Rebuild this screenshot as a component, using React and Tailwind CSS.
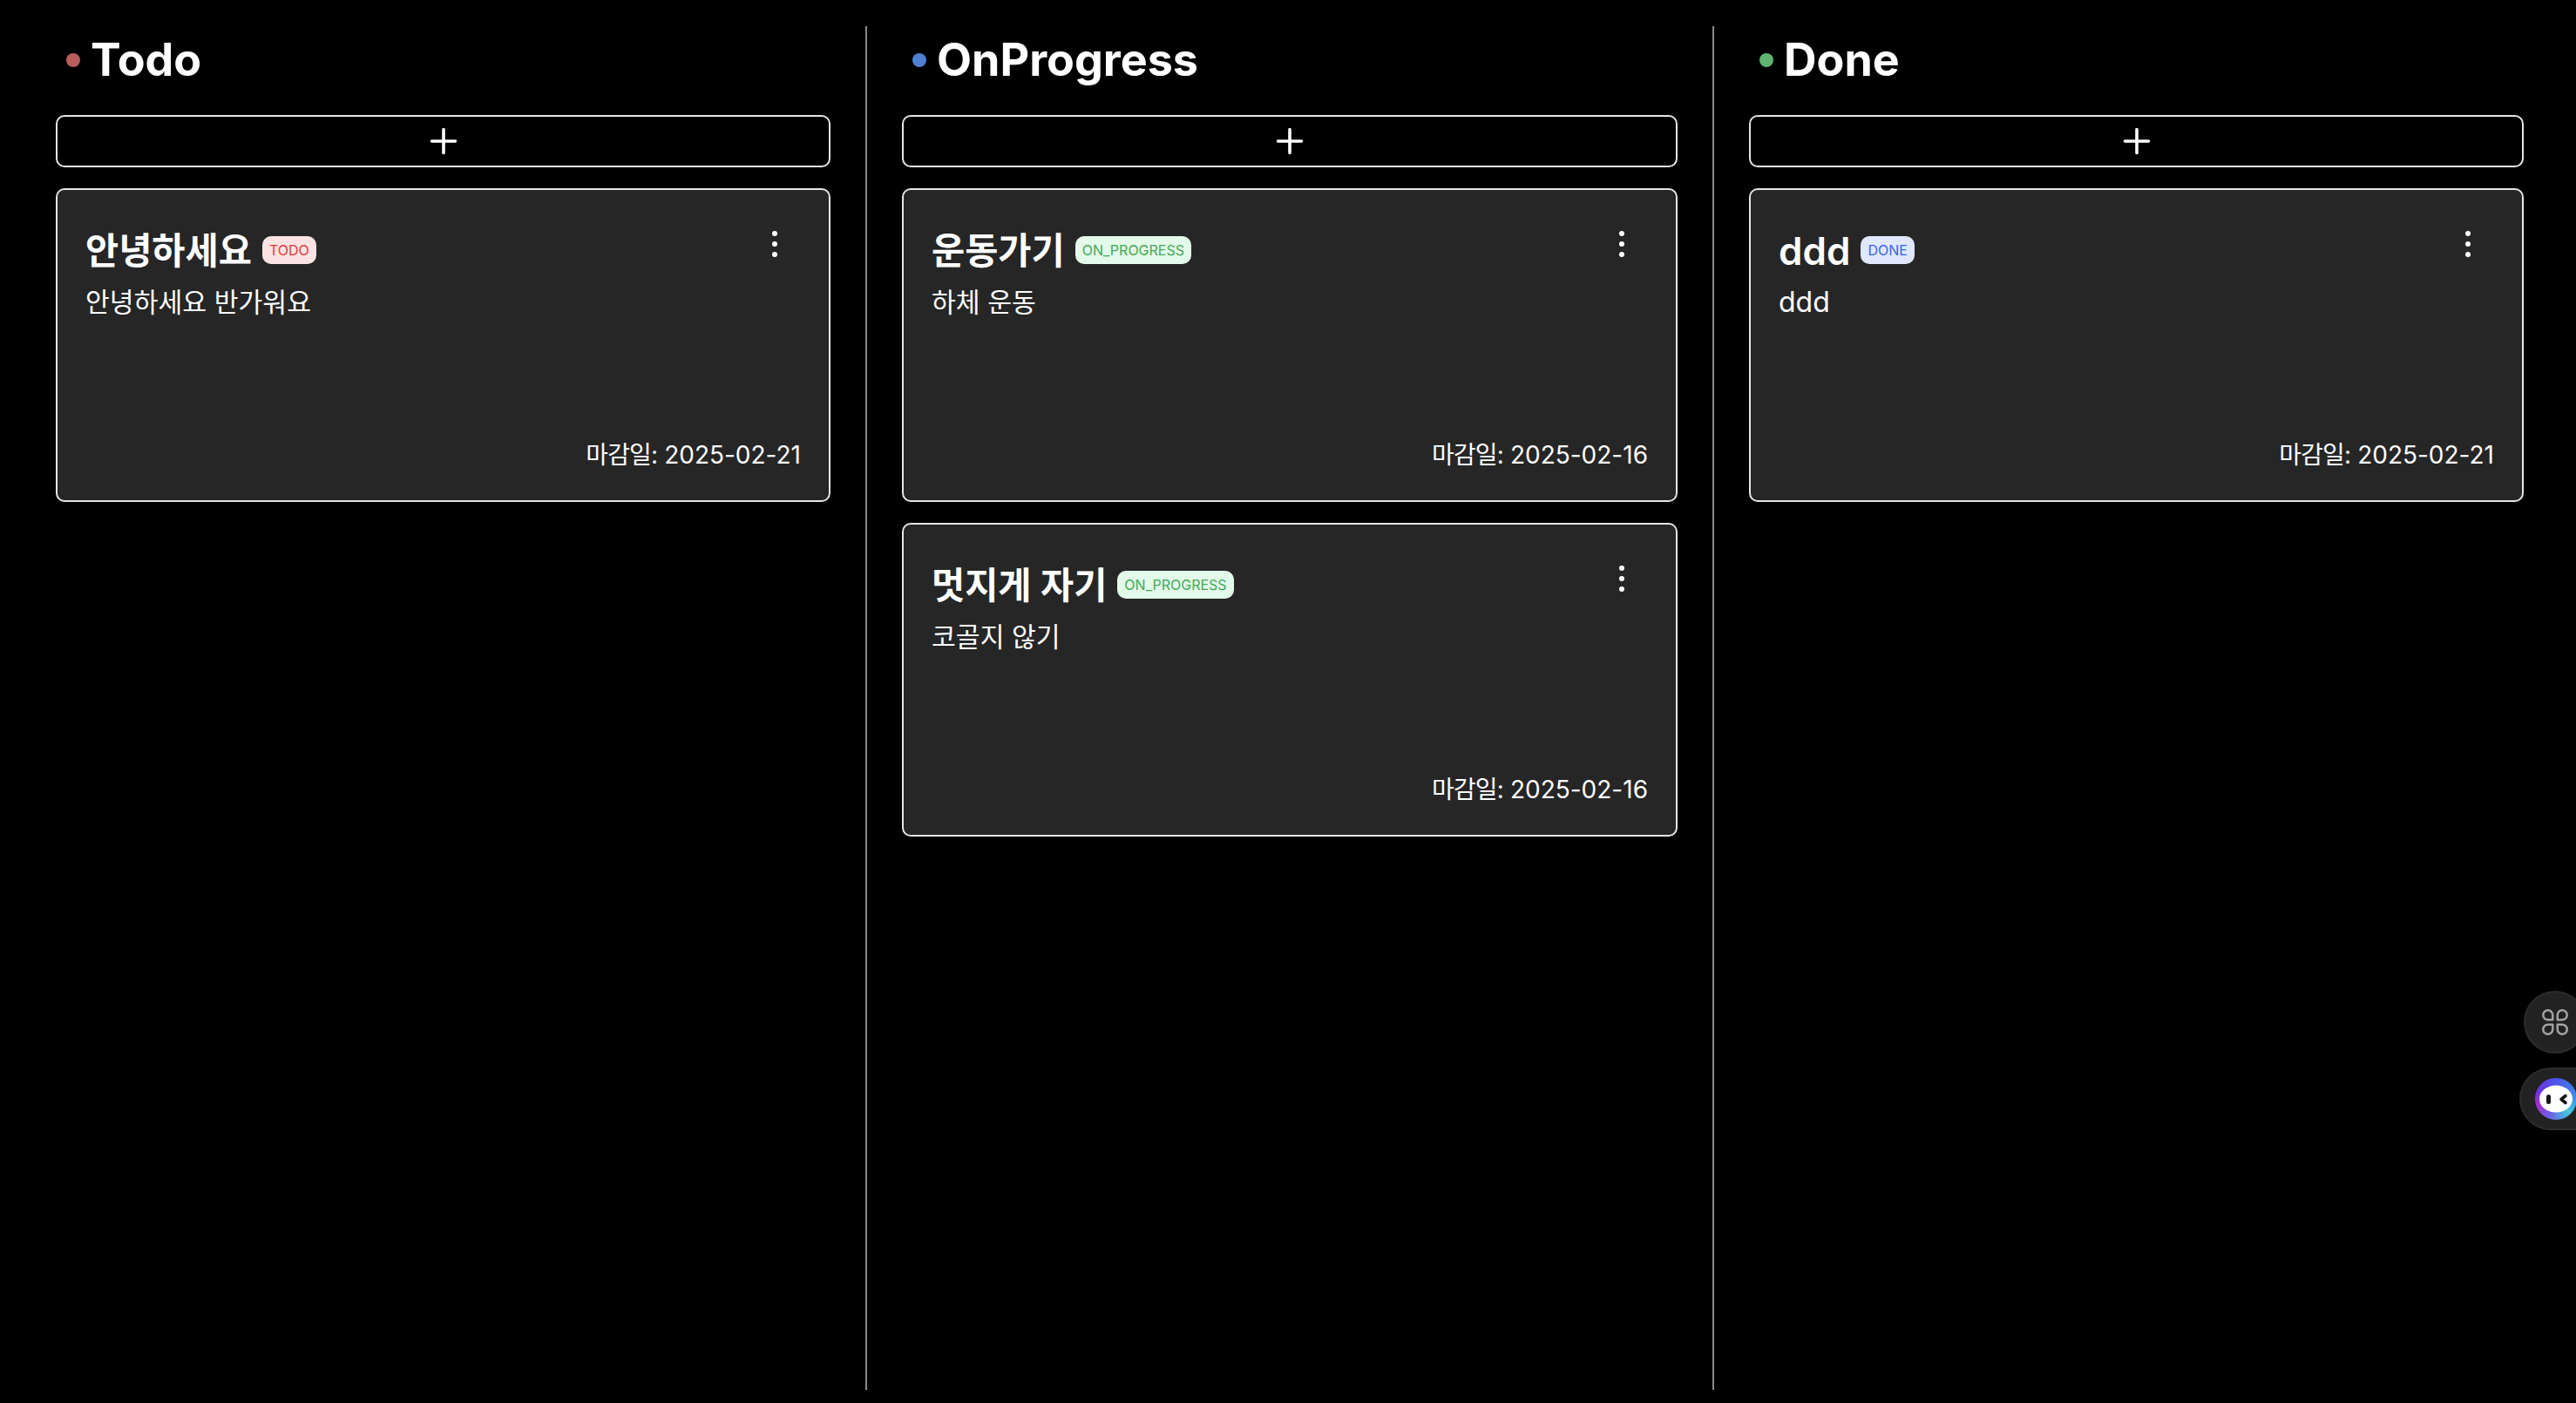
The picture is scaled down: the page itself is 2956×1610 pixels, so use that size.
import React from "react";

function Plus() {
  return (
    <svg width="32" height="32" viewBox="0 0 32 32" fill="none" stroke="#ffffff" strokeWidth="3.6" strokeLinecap="round">
      <path d="M16 2.500v27M2.500 16h27" />
    </svg>
  );
}

function Kebab() {
  return (
    <svg width="12" height="36" viewBox="0 0 12 36" fill="#ffffff">
      <circle cx="6" cy="6" r="3" />
      <circle cx="6" cy="18" r="3" />
      <circle cx="6" cy="30" r="3" />
    </svg>
  );
}

const badgeTone = {
  TODO: "bg-[#fbe3e3] text-[#e03a3a]",
  ON_PROGRESS: "bg-[#e3f9e9] text-[#43a857]",
  DONE: "bg-[#e0e8ff] text-[#3b63e6]",
};

function Card({ title, status, desc, due, latin }) {
  return (
    <div className="h-[360px] rounded-[10px] border-2 border-[#e5e5e5] bg-[#262626] px-[32px] pt-[32px] pb-[30px] flex flex-col">
      <div className="flex items-start justify-between">
        <div className="flex items-center gap-[12px] h-[44px] mt-[16px]">
          <span className={(latin ? "text-[44px]" : "text-[41.5px]") + " leading-[44px] font-semibold text-white"}>{title}</span>
          <span className={"mb-[2px] h-[32px] rounded-[10px] px-[8px] text-[16px] leading-[32px] " + badgeTone[status]}>{status}</span>
        </div>
        <div className="mr-[24px] mt-[12px]">
          <Kebab />
        </div>
      </div>
      <p className={"mt-[15px] leading-[44px] text-white " + (latin ? "text-[32px]" : "text-[30.25px]")}>{desc}</p>
      <p className="mt-auto text-right text-[28px] leading-[44px] text-white">
        <span className="tracking-[-0.03em]">마감일:</span> {due}
      </p>
    </div>
  );
}

function Column({ name, dot, cards, divider }) {
  return (
    <section className={"px-[40px] flex flex-col " + (divider ? "border-l-2 border-[#8a8a8a]" : "")}>
      <div className="flex items-center h-[72px] mt-[3px] pl-[12px] gap-[12px]">
        <span className={"w-[16px] h-[16px] rounded-full " + dot} />
        <h2 className="text-[52px] leading-[72px] font-bold text-white">{name}</h2>
      </div>
      <button className="mt-[27px] h-[60px] rounded-[10px] border-2 border-[#e5e5e5] bg-black flex items-center justify-center">
        <Plus />
      </button>
      <div className="mt-[24px] flex flex-col gap-[24px]">
        {cards.map((c) => (
          <Card key={c.title} {...c} />
        ))}
      </div>
    </section>
  );
}

function Widgets() {
  return (
    <div className="fixed left-[2891px] top-[1137px] w-[120px]">
      <div className="ml-[5px] w-[72px] h-[72px] rounded-full bg-[#222222] border-2 border-[#2c2c2c] flex items-center justify-center">
        <svg width="30" height="30" viewBox="0 0 30 30" fill="none" stroke="#a3a3a3" strokeWidth="2.5" strokeLinejoin="round">
          <path d="M12.250 12.250H6.750a5.500 5.500 0 1 1 5.500-5.500z" />
          <path d="M17.750 12.250V6.750a5.500 5.500 0 1 1 5.500 5.500z" />
          <path d="M12.250 17.750V23.250a5.500 5.500 0 1 1-5.500-5.500z" />
          <path d="M17.750 17.750H23.250a5.500 5.500 0 1 1-5.500 5.500z" />
        </svg>
      </div>
      <div className="mt-[16px] w-[120px] h-[72px] rounded-l-[36px] bg-[#222222] border-2 border-[#2c2c2c] flex items-center pl-[16px]">
        <div className="w-[48px] h-[48px] rounded-full bg-[conic-gradient(#4a55e8,#3f8fe8_90deg,#45c8d8_135deg,#6a60e8_200deg,#a030d0_250deg,#6a35e0_300deg,#4a55e8)]">
          <svg width="48" height="48" viewBox="0 0 48 48">
            <ellipse cx="24" cy="24" rx="19" ry="15.500" fill="#ffffff" />
            <rect x="13" y="19" width="5" height="11" rx="2.500" fill="#171717" />
            <path d="M35 20.500 L30 24.500 L35 28.500" stroke="#171717" strokeWidth="3.600" strokeLinecap="round" strokeLinejoin="round" fill="none" />
          </svg>
        </div>
      </div>
    </div>
  );
}

export default function App() {
  return (
    <div className="w-[2956px] h-[1610px] overflow-hidden bg-black pl-[24px] pt-[30px] pb-[15px] font-['Inter','Noto_Sans_CJK_KR',sans-serif]">
      <div className="grid grid-cols-[969px_972px_971px] h-full">
        <Column
          name="Todo"
          dot="bg-[#b85c5c]"
          cards={[{ title: "안녕하세요", status: "TODO", desc: "안녕하세요 반가워요", due: "2025-02-21" }]}
        />
        <Column
          divider
          name="OnProgress"
          dot="bg-[#4f7fd0]"
          cards={[
            { title: "운동가기", status: "ON_PROGRESS", desc: "하체 운동", due: "2025-02-16" },
            { title: "멋지게 자기", status: "ON_PROGRESS", desc: "코골지 않기", due: "2025-02-16" },
          ]}
        />
        <Column
          divider
          name="Done"
          dot="bg-[#5fb36f]"
          cards={[{ title: "ddd", status: "DONE", desc: "ddd", due: "2025-02-21", latin: true }]}
        />
      </div>
      <Widgets />
    </div>
  );
}
